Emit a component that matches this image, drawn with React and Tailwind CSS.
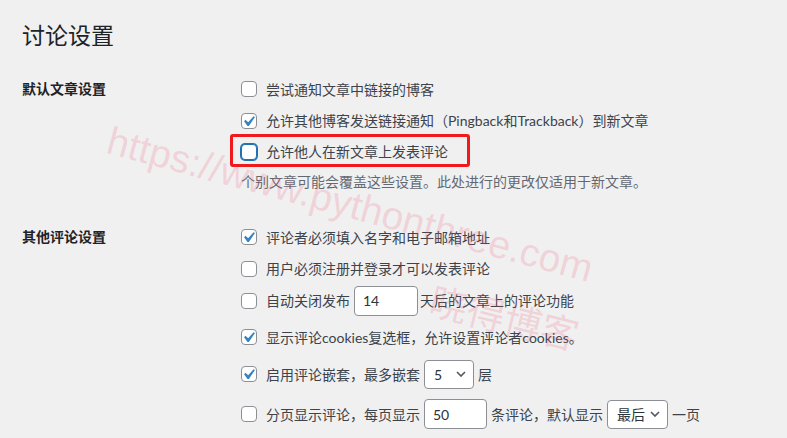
const font = "font-['Lato','Noto_Sans_CJK_SC',sans-serif]";

function Checkbox({ checked, focus }) {
  return (
    <span
      className={`relative inline-block h-[16px] w-[16px] shrink-0 rounded-[4px] border bg-white ${
        focus
          ? "border-[#2271b1] shadow-[0_0_0_1px_#2271b1]"
          : "border-[#8c8f94]"
      }`}
    >
      {checked ? (
        <svg
          viewBox="0 0 20 20"
          className="absolute left-[-4px] top-[-3px] h-[21px] w-[21px]"
        >
          <path
            d="M14.83 4.89l1.34.94-5.81 8.38H9.02L5.78 9.67l1.34-1.25 2.57 2.4z"
            fill="#3582c4"
          />
        </svg>
      ) : null}
    </span>
  );
}

function Chevron() {
  return (
    <svg viewBox="0 0 10 6" className="h-[6px] w-[10px]">
      <path d="M1 1l4 4 4-4" fill="none" stroke="#50575e" strokeWidth="1.6" />
    </svg>
  );
}

function Row({ checked, focus, h, children }) {
  return (
    <div className={`flex items-center ${h}`}>
      <Checkbox checked={checked} focus={focus} />
      <div className="ml-[9px] flex items-center whitespace-nowrap">{children}</div>
    </div>
  );
}

function NumberBox({ value, w }) {
  return (
    <input
      readOnly
      defaultValue={value}
      className={`mx-[4px] h-[30px] rounded-[4px] border border-[#8c8f94] bg-white pl-[8px] text-[14px] text-[#2c3338] outline-none ${w}`}
    />
  );
}

function SelectBox({ value, w }) {
  return (
    <div
      className={`mx-[4px] flex h-[29px] items-center justify-between rounded-[4px] border border-[#8c8f94] bg-white pl-[9px] pr-[7px] text-[#2c3338] ${w}`}
    >
      <span>{value}</span>
      <Chevron />
    </div>
  );
}

export default function App() {
  return (
    <div
      className={`relative h-[438px] w-[787px] overflow-hidden bg-[#f0f0f1] pl-[22px] pt-[20px] text-[14px] text-[#3c434a] ${font}`}
    >
      <h1 className="text-[23px] font-normal leading-[30px] text-[#1d2327]">讨论设置</h1>

      <div className="mt-[23px] flex">
        <div className="h-[32px] w-[219px] font-semibold leading-[32px] text-[#1d2327]">
          默认文章设置
        </div>
        <div>
          <Row h="h-[32px]">尝试通知文章中链接的博客</Row>
          <Row checked h="h-[31px]">
            允许其他博客发送链接通知（Pingback和Trackback）到新文章
          </Row>
          <div className="relative">
            <Row focus h="h-[31px]">允许他人在新文章上发表评论</Row>
            <div className="pointer-events-none absolute left-[-11px] top-[-2px] h-[33px] w-[240px] rounded-[3px] border-[3px] border-[#f2191c]" />
          </div>
          <p className="mt-[5px] h-[20px] leading-[20px] text-[#646970]">
            个别文章可能会覆盖这些设置。此处进行的更改仅适用于新文章。
          </p>
        </div>
      </div>

      <div className="mt-[29px] flex">
        <div className="h-[32px] w-[219px] font-semibold leading-[32px] text-[#1d2327]">
          其他评论设置
        </div>
        <div>
          <Row checked h="h-[32px]">评论者必须填入名字和电子邮箱地址</Row>
          <Row h="h-[31px]">用户必须注册并登录才可以发表评论</Row>
          <Row h="h-[33px]">
            自动关闭发布
            <NumberBox value="14" w="w-[64px] ml-[4px] mr-[2px]" />
            天后的文章上的评论功能
          </Row>
          <Row checked h="h-[40px]">
            显示评论cookies复选框，允许设置评论者cookies。
          </Row>
          <Row checked h="h-[34px]">
            启用评论嵌套，最多嵌套
            <SelectBox value="5" w="w-[50px]" />
            层
          </Row>
          <Row h="h-[46px]">
            分页显示评论，每页显示
            <NumberBox value="50" w="w-[63px]" />
            条评论，默认显示
            <SelectBox value="最后" w="w-[61px]" />
            一页
          </Row>
        </div>
      </div>

      <div className="pointer-events-none absolute left-[350px] top-[205px] -translate-x-1/2 -translate-y-1/2 rotate-[15deg] whitespace-nowrap font-['Liberation_Sans',sans-serif] text-[39px] text-[rgba(235,90,110,0.2)]">
        https://www.pythonthree.com
      </div>
      <div className="pointer-events-none absolute left-[505px] top-[316px] -translate-x-1/2 -translate-y-1/2 rotate-[14deg] whitespace-nowrap font-['Noto_Sans_CJK_SC',sans-serif] text-[38px] text-[rgba(235,90,110,0.2)]">
        晓得博客
      </div>
    </div>
  );
}
